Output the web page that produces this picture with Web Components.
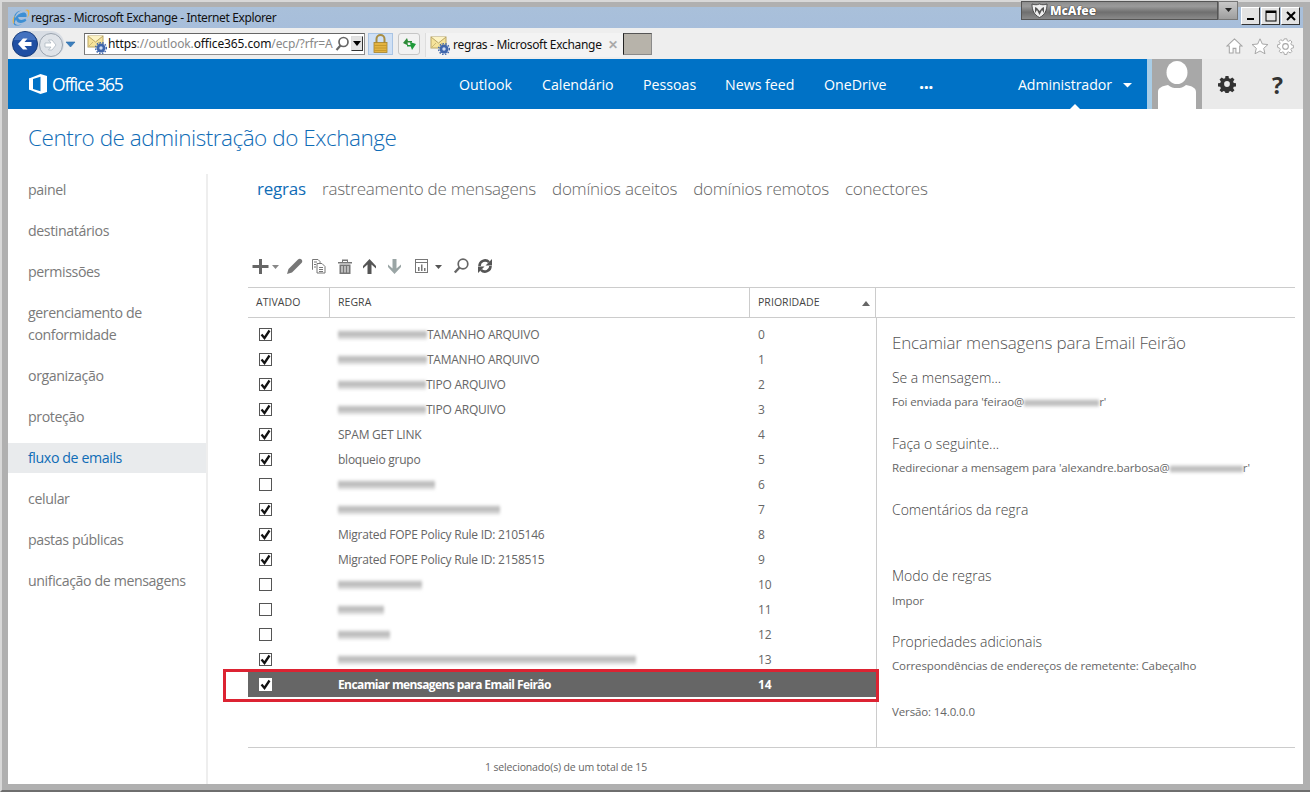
<!DOCTYPE html>
<html lang="pt"><head><meta charset="utf-8"><title>regras - Microsoft Exchange</title>
<style>
html,body{margin:0;padding:0;height:792px;overflow:hidden;background:#b0b0b0;font-family:"Open Sans","Liberation Sans",sans-serif}
</style></head><body>
<ie-window>
  <ie-titlebar></ie-titlebar>
  <ie-toolbar></ie-toolbar>
  <o365-header></o365-header>
  <eac-app></eac-app>
</ie-window>
<script>
const el=(html)=>{const t=document.createElement('template');t.innerHTML=html;return t};
const mk=(name,html)=>{const t=el(html);customElements.define(name,class extends HTMLElement{constructor(){super();this.attachShadow({mode:'open'}).appendChild(t.content.cloneNode(true))}})};
const mailIcon=`<svg width="20" height="20" viewBox="0 0 20 20"><rect x="1" y="2" width="15" height="11" fill="#f6e39a" stroke="#b9a566"/><path d="M1 2l7.5 6L16 2" fill="#fdf3c4" stroke="#b9a566"/><path d="M1 13l5-5M16 13l-5-5" stroke="#cdb878" fill="none"/><circle cx="14" cy="14" r="4.5" fill="#3f66ac"/><circle cx="14" cy="14" r="5.4" fill="none" stroke="#3f66ac" stroke-width="1.4" stroke-dasharray="1.5 1.4"/><circle cx="14" cy="14" r="1.7" fill="#cfdcf2"/></svg>`;

mk('ie-window',`<style>:host{display:flex;flex-direction:column;box-sizing:border-box;width:1310px;height:792px;padding:7px 7px 6px 6px;background:#b0b0b0;border-top:2px solid #d8d8d8;border-left:2px solid #d8d8d8;border-bottom:2px solid #6e6e6e;position:relative}</style><slot></slot>`);

mk('ie-titlebar',`<style>
:host{display:flex;align-items:center;height:21px;margin:-2px -7px 0 -6px;padding-left:6px;padding-right:7px;flex:none;position:relative;font:12px "Noto Sans","Liberation Sans",sans-serif;color:#111}
.bg{position:absolute;left:6px;right:7px;top:0;bottom:0;background:linear-gradient(#a9c0da,#a7bedb)}
.row{position:relative;display:flex;align-items:center;width:100%}
.t{margin-left:0;letter-spacing:-.38px;white-space:nowrap}
.sp{flex:1}
.mc{position:absolute;left:1013px;top:-7px;width:197px;height:19px;box-sizing:border-box;border:1px solid #555;background:linear-gradient(#8d8d8d,#9b9b9b 25%,#6f6f6f 60%,#8a8a8a);display:flex;align-items:center;padding-left:9px;color:#fff;font:700 12px "Open Sans",sans-serif;text-shadow:0 0 1px #222,0 0 1px #222}
.mc b{margin-left:2px;letter-spacing:-.1px}
.dd{position:absolute;left:1210px;top:-7px;width:20px;height:19px;box-sizing:border-box;background:linear-gradient(#c8c8c8,#9e9e9e);border:1px solid #777;display:flex;align-items:center;justify-content:center}
.wb{position:absolute;top:-1px;height:18px;width:19px;box-sizing:border-box;background:#e3e3e3;border:1px solid;border-color:#fff #333 #333 #fff;display:flex;align-items:center;justify-content:center}
</style>
<div class="bg"></div>
<div class="row">
<svg width="20" height="19" viewBox="0 0 20 19" style="margin-left:3px"><path d="M3 12C2 6 7 2 11 2.500 7 3 4 7 4 10c2-3 5-5 8-5.500 3-.5 4 2 3.500 4.500H7.200c0 3 4 4 7 1.500l1.200 2C12 16 6 16 5 11.500L3.600 14.500C4 17 7 17.800 11 16 7 18.500 2.500 18 2.500 15 2.500 14 3 13 3 12z" fill="#3d8fd4"/><path d="M7.500 7.500h5c0-2-4-2.500-5 0z" fill="#3d8fd4"/><path d="M14 2c3-1.500 5 0 4.200 3.500-.4 2-1 3.500-2.200 5 .8-2.500 1.500-5 .8-6.500-.5-1-1.500-1.500-2.800-2z" fill="#e8b24a"/><path d="M2 15.500C1 12 2 9.500 4 7 3 10 2.500 13 3 15.500z" fill="#e8b24a"/></svg>
<span class="t">regras - Microsoft Exchange - Internet Explorer</span>
<span class="sp"></span>
<div class="mc"><svg width="17" height="15" viewBox="0 0 17 15"><path d="M1 1c3 1 5 1 7.500 0C11 2 13 2 16 1c0 6-2 11-7.500 13.500C3 12 1 7 1 1z" fill="#eee" stroke="#333" stroke-width=".8"/><path d="M4 4v6l2-3 2.500 5L11 7l2 3V4l-2 1-2.500 3L6 5z" fill="#555"/></svg><b>McAfee</b></div>
<div class="dd"><svg width="9" height="5"><path d="M1 0h7L4.500 4z" fill="#222"/></svg></div>
<div class="wb" style="left:1233px"><svg width="10" height="10"><rect x="1" y="7" width="7" height="2" fill="#000"/></svg></div>
<div class="wb" style="left:1253px"><svg width="12" height="12"><rect x="1" y="1" width="10" height="10" fill="none" stroke="#000"/><rect x="1" y="1" width="10" height="2"/></svg></div>
<div class="wb" style="left:1273px"><svg width="12" height="12"><path d="M2 2l8 8M10 2l-8 8" stroke="#000" stroke-width="2"/></svg></div>
</div>`);

mk('ie-toolbar',`<style>
:host{display:flex;align-items:center;height:31px;flex:none;background:#eeeeee;padding-left:3px;font:12px "Noto Sans","Liberation Sans",sans-serif;color:#111}
.nav{display:flex;align-items:center;width:73px;flex:none}
.addr{display:flex;align-items:center;box-sizing:border-box;width:281px;height:22px;background:#fff;border:1px solid #8e8e8e;border-top-color:#666;border-left-color:#777;flex:none;padding-left:2px}
.url{margin-left:1px;letter-spacing:-.12px;color:#888;white-space:nowrap;width:227px;flex:none}
.url b{font-weight:400;color:#111}
.sb{box-sizing:border-box;width:12px;height:15px;background:#e2e2e2;border:1px solid #444;border-color:#ddd #333 #333 #ddd;display:flex;align-items:center;justify-content:center;margin-left:1px}
.lock{width:25px;height:22px;margin-left:3px;flex:none;background:#cfe0f5;border:1px solid #a9c4e4;box-sizing:border-box;display:flex;align-items:center;justify-content:center}
.ref{width:22px;height:22px;margin-left:5px;flex:none;background:#f2f2f2;border:1px solid #c6c6c6;border-radius:3px;box-sizing:border-box;display:flex;align-items:center;justify-content:center}
.tab{display:flex;align-items:center;width:198px;height:24px;margin-left:5px;flex:none;box-sizing:border-box;background:#f3f3f3;border-left:1px solid #ddd;padding-left:4px;position:relative;top:1px}
.tt{margin-left:3px;letter-spacing:-.3px;white-space:nowrap;width:147px;flex:none}
.x{color:#a9a9a9;font-weight:700;font-size:12px;margin-left:8px;font-family:"Liberation Sans",sans-serif}
.grey{width:29px;height:22px;flex:none;background:#b7b3aa;border:1px solid;border-color:#555 #8a8a8a #8a8a8a #222;box-sizing:border-box}
.sp{flex:1}
.ic{display:flex;gap:8px;margin-right:9px;position:relative;top:2px}
</style>
<div class="nav">
<svg width="72" height="28" viewBox="0 0 72 28"><path d="M14 1h26a13 13 0 0 1 0 26H14z" fill="#cfd6df" opacity=".7"/><circle cx="14" cy="14" r="12.500" fill="#1f4fa3" stroke="#163a78"/><path d="M14 2a12 12 0 0 1 11 8H3a12 12 0 0 1 11-8z" fill="#5d8bd2" opacity=".6"/><path d="M20.500 12h-7l3-3.500H12L7 14l5 5.500h4.500l-3-3.500h7z" fill="#fff"/><circle cx="40" cy="15" r="11.500" fill="#dfe3e8" stroke="#9aa3ae"/><path d="M34 13h6l-2.500-3h3.500l4 5-4 5h-3.500l2.500-3h-6z" fill="#fff" stroke="#a8b1bc" stroke-width=".7"/><path d="M55 12h9l-4.500 5z" fill="#3b7fbe" stroke="#2b6aa5" stroke-width=".6"/></svg>
</div>
<div class="addr">${mailIcon}<span class="url"><b>https</b>://outlook.<b>office365.com</b>/ecp/?rfr=A</span>
<svg width="15" height="16" viewBox="0 0 15 16" style="flex:none"><circle cx="8.500" cy="6" r="4.500" fill="none" stroke="#666" stroke-width="1.700"/><path d="M5.500 9.500L1.500 14" stroke="#666" stroke-width="2.200"/></svg>
<div class="sb"><svg width="8" height="5"><path d="M0 0h8L4 5z" fill="#000"/></svg></div></div>
<div class="lock"><svg width="15" height="20" viewBox="0 0 15 20"><path d="M3.500 9V5a4 4 0 0 1 8 0v4" fill="none" stroke="#a88d43" stroke-width="2"/><rect x="1" y="8.500" width="13" height="10" fill="#e3b341" stroke="#a5822c" stroke-width=".8"/><path d="M1 11.500h13M1 14h13M1 16.500h13" stroke="#c69a2e"/></svg></div>
<div class="ref"><svg width="17" height="15" viewBox="0 0 17 15"><path d="M2 7l4-5 1 3h4v1.500H6.500l.5 3z" fill="#2e8b38"/><path d="M15 7l-4 6-1.200-3.500H6V8h3.500l-.5-3z" fill="#1f9a3a" transform="translate(0 1)"/></svg></div>
<div class="tab">${mailIcon}<span class="tt">regras - Microsoft Exchange</span><span class="x">✕</span></div>
<div class="grey"></div>
<span class="sp"></span>
<div class="ic">
<svg width="17" height="18" viewBox="0 0 18 18" fill="#fff" stroke="#a5a5a5" stroke-width="1.100"><path d="M9 1.500L1 9h2.500v7.500h4v-5h3v5h4V9H17z"/></svg>
<svg width="18" height="18" viewBox="0 0 20 18" fill="#fff" stroke="#a5a5a5" stroke-width="1.100"><path d="M10 1l2.600 5.800 6.200.6-4.700 4.200 1.400 6L10 14.500 4.500 17.600l1.400-6L1.200 7.400l6.200-.6z"/></svg>
<svg width="17" height="18" viewBox="0 0 18 18" fill="#fff" stroke="#a5a5a5" stroke-width="1.100"><path d="M7.500 1h3l.4 2.300 1.600.7 2-1.300 2 2-1.300 2 .7 1.600 2.300.4v3l-2.300.4-.7 1.600 1.300 2-2 2-2-1.300-1.600.7-.4 2.300h-3l-.4-2.300-1.600-.7-2 1.300-2-2 1.300-2-.7-1.600L-.4 11V8l2.300-.4.7-1.600-1.300-2 2-2 2 1.300 1.600-.7z" transform="translate(1 .5) scale(.9)"/><circle cx="9" cy="9.500" r="3"/></svg>
</div>`);

mk('o365-header',`<style>
:host{display:flex;align-items:stretch;height:50px;flex:none;background:#0072c6;color:#fff;font:14.2px "Open Sans",sans-serif}
.logo{display:flex;align-items:center;width:451px;flex:none;padding-left:21px;box-sizing:border-box}
.brand{font-size:17.500px;letter-spacing:-1.200px;margin-left:5px;font-weight:400}
nav{display:flex;align-items:center;width:688px;flex:none;position:relative}
nav span{position:absolute;white-space:nowrap;letter-spacing:0}
.adm{position:absolute;left:559px;top:16px}
nav span.adm{letter-spacing:-.1px}
.strip{width:5px;background:#a9cde6;flex:none}
.ava{width:50px;background:#a8a8a8;flex:none;display:flex}
.tools{flex:1;background:#eaeaea;display:flex;align-items:center;position:relative;color:#333}
.q{position:absolute;left:70px;top:10px;font:700 23px "Open Sans",sans-serif;color:#333}
.g{position:absolute;left:16px;top:16px}
.notch{position:absolute;left:611px;bottom:0;width:0;height:0;border:5px solid transparent;border-bottom-color:#fff;border-top:0}
nav span.dots{font-weight:700;top:11px;font-size:18px;letter-spacing:-.5px}
</style>
<div class="logo"><svg width="18" height="20" viewBox="0 0 18 20"><path d="M0 4.500L11.500 0 18 2v16l-6.500 2L0 15.500zM11.500 2.800L4 5v10l7.500 2.200z" fill="#fff"/><path d="M4 4.800v10.500L0 15.500V4.500z" fill="#fff"/></svg><span class="brand">Office 365</span></div>
<nav>
<span style="left:0">Outlook</span><span style="left:83px">Calendário</span><span style="left:184px">Pessoas</span><span style="left:266px">News feed</span><span style="left:365px">OneDrive</span><span class="dots" style="left:460px">...</span>
<span class="adm">Administrador</span>
<svg style="position:absolute;left:664px;top:24px" width="10" height="5"><path d="M0 0h9L4.500 4.500z" fill="#fff"/></svg>
<div class="notch"></div>
</nav>
<div class="strip"></div>
<div class="ava"><svg width="50" height="50" viewBox="0 0 50 50"><path d="M6 50v-17c0-4 4-6 10-7 3 2.500 5 3 9 3s6-.5 9-3c6 1 10 3 10 7v17z" fill="#fff"/><ellipse cx="25" cy="13.500" rx="10.500" ry="11.500" fill="#fff"/></svg></div>
<div class="tools">
<svg class="g" width="18" height="18" viewBox="0 0 18 18"><path fill="#333" fill-rule="evenodd" d="M7.300 0h3.400l.4 2.500 1.700.7 2.100-1.500 2.400 2.400-1.500 2.100.7 1.700 2.500.4v3.400l-2.500.4-.7 1.700 1.500 2.100-2.400 2.400-2.100-1.500-1.700.7-.4 2.500H7.300l-.4-2.500-1.700-.7-2.100 1.500L.7 15.900l1.500-2.100-.7-1.700L-1 11.700V8.300l2.500-.4.700-1.700L.7 4.100l2.400-2.400 2.100 1.500 1.700-.7zM9 5.800a3.200 3.200 0 1 0 0 6.400 3.200 3.200 0 0 0 0-6.400z" transform="translate(.9 .9) scale(.9)"/></svg>
<span class="q">?</span>
</div>`);

mk('eac-nav',`<style>
:host{display:block;width:200px;flex:none;box-sizing:border-box;padding-top:1px;border-right:2px solid #eeeeee;font:14.2px/22px "Open Sans",sans-serif;color:#7a7a7a;letter-spacing:-.4px}
div{padding:4px 0 4px 20px;margin-bottom:11px}
.on{background:#e9ebed;color:#0f6cb6;font-weight:400}
</style>
<div>painel</div><div>destinatários</div><div>permissões</div><div>gerenciamento de<br>conformidade</div><div>organização</div><div>proteção</div><div class="on">fluxo de emails</div><div>celular</div><div>pastas públicas</div><div>unificação de mensagens</div>`);

mk('eac-tabs',`<style>
:host{display:flex;gap:16px;height:28px;padding-left:9px;align-items:center;font:300 17px "Open Sans",sans-serif;color:#666;letter-spacing:-.24px;white-space:nowrap}
.on{color:#0f6cb6;font-weight:400;letter-spacing:-.2px}
</style><span class="on">regras</span><span>rastreamento de mensagens</span><span>domínios aceitos</span><span>domínios remotos</span><span>conectores</span>`);

mk('eac-tools',`<style>:host{display:flex;align-items:center;height:26px;padding-left:4px;margin-bottom:7px}</style>
<svg width="245" height="20" viewBox="0 0 245 20" fill="#666">
<path d="M7 3h3v6h6.500v3H10v6H7v-6H.5V9H7z"/><path d="M20 9h7l-3.500 4z" fill="#888"/>
<path d="M35 18l1.500-5L46 3.500c1-1 2.500-1 3.500 0s1 2.500 0 3.500L40 16.500z" fill="#777"/>
<g fill="none" stroke="#777"><path d="M61 13.500h-.5v-10h5.500l2 2v2"/><path d="M65 7.500h5l3 3v6.500h-8z"/><path d="M62 6h3M62 8.500h2M62 11h2M67 11.500h4M67 13.500h4M67 15.500h4"/></g>
<path d="M86 6h14v1.500H86zM90 3.500h6V6h-1V5h-4v1h-1zM87.500 8.500h11V18h-11zM89.500 10v6.500h1V10zM92.500 10v6.500h1V10zM95.500 10v6.500h1V10z" fill-rule="evenodd" fill="#777"/>
<path d="M117.500 3L124 10v2.500l-4.500-4V18h-4V8.500L111 12.500V10z" fill="#555"/>
<path d="M142.500 18L149 11V8.500l-4.500 4V3h-4v9.500L136 8.500V11z" fill="#9aa5a5"/>
<g fill="none" stroke="#777"><rect x="163.500" y="3.500" width="12" height="13"/><path d="M163.500 6.500h12"/></g><path d="M166 11h1.500v4H166zM169 8.500h1.500V15H169zM172 12h1.500v3H172z" fill="#777"/>
<path d="M183 9h7l-3.500 4z" fill="#555"/>
<circle cx="211" cy="8" r="4.800" fill="none" stroke="#666" stroke-width="1.700"/><path d="M207.500 11.500L202.800 16.500" stroke="#666" stroke-width="2.400"/>
<g fill="none" stroke="#555" stroke-width="2.600"><path d="M227.500 10a5.500 5.500 0 0 1 9.500-3.800"/><path d="M238.500 10a5.500 5.500 0 0 1-9.500 3.800"/></g><path d="M240 3v6.500h-6.500zM226 17v-6.500h6.500z" fill="#555"/>
</svg>`);

mk('rule-row',`<style>
:host{display:grid;grid-template-columns:90px 420px 118px;height:25px;align-items:center;font:12px "Open Sans",sans-serif;color:#666;letter-spacing:-.24px;white-space:nowrap}
:host([sel]){background:#666;color:#fff;font-weight:700;letter-spacing:-.6px}
.c{padding-left:11px;display:flex}
.r{display:flex;align-items:center}
.p{letter-spacing:0}
.blur{height:10px;background:linear-gradient(#e6e6e6,#b2b2b2 40%,#cfcfcf 68%,#f0f0f0);filter:blur(1.400px);flex:none}
svg{display:block}
</style>
<div class="c"><svg width="13" height="13"><rect class="b" x=".5" y=".5" width="12" height="12" fill="#fff" stroke="#555"/><path class="k" d="M2.500 6.500l3 3.500 5-7.500" fill="none" stroke="#111" stroke-width="2.300"/></svg></div>
<div class="r"><span class="blur"></span><span class="n"></span></div>
<div class="p"></div>`);
const rr=(r)=>{const s=r.shadowRoot,g=a=>r.getAttribute(a);
 if(!r.hasAttribute('on'))s.querySelector('.k').remove();
 if(r.hasAttribute('sel')){s.querySelector('.b').setAttribute('stroke','#fff')}
 const b=s.querySelector('.blur');if(g('blur'))b.style.width=g('blur')+'px';else b.remove();
 s.querySelector('.n').textContent=g('name')||'';s.querySelector('.p').textContent=g('pri');};

mk('rules-list',`<style>
:host{display:block;width:628px;flex:none;padding-top:4px;box-sizing:border-box}
</style><slot></slot>`);

mk('rule-detail',`<style>
:host{display:block;flex:1;border-left:1px solid #ccc;padding-left:15px;font:11.500px "Open Sans",sans-serif;color:#666;letter-spacing:-.12px;white-space:nowrap}
h2{margin:0;position:relative;font:300 17px/22px "Open Sans",sans-serif;color:#555;letter-spacing:-.15px;padding-top:14px}
h3{margin:0;font:300 14px/20px "Open Sans",sans-serif;color:#444;letter-spacing:-.03px}
p{margin:0;line-height:16px}
.blur{display:inline-block;height:8px;background:linear-gradient(#e2e2e2,#b4b4b4 50%,#e2e2e2);filter:blur(1.500px);vertical-align:-1px}
</style>
<h2>Encamiar mensagens para Email Feirão</h2>
<h3 style="margin-top:14px">Se a mensagem...</h3>
<p style="margin-top:6px">Foi enviada para 'feirao@<span class="blur" style="width:75px"></span>r'</p>
<h3 style="margin-top:24px">Faça o seguinte...</h3>
<p style="margin-top:6px">Redirecionar a mensagem para 'alexandre.barbosa@<span class="blur" style="width:73px"></span>r'</p>
<h3 style="margin-top:24px">Comentários da regra</h3>
<h3 style="margin-top:46px">Modo de regras</h3>
<p style="margin-top:7px">Impor</p>
<h3 style="margin-top:23px">Propriedades adicionais</h3>
<p style="margin-top:6px">Correspondências de endereços de remetente: Cabeçalho</p>
<p style="margin-top:30px">Versão: 14.0.0.0</p>`);

mk('rules-table',`<style>
:host{display:block;font:10.500px "Open Sans",sans-serif;color:#444;position:relative}
.hd{display:grid;grid-template-columns:82px 420px 126px 1fr;height:31px;box-sizing:border-box;border-top:1px solid #ccc;border-bottom:1px solid #ccc;align-items:stretch;letter-spacing:.05px}
.hd div{display:flex;align-items:center;padding:0 0 2px 8px;border-right:1px solid #ccc;box-sizing:border-box;position:relative}
.hd div:last-child{border:0}
.body{display:flex;height:430px;border-bottom:1px solid #ccc;box-sizing:border-box}
.ft{height:38px;display:flex;align-items:center;padding-left:237px;color:#666;font-size:10.500px;letter-spacing:-.15px}
.hl{position:absolute;left:-25px;top:382px;width:656px;height:33px;box-sizing:border-box;border:3px solid #dc2332;pointer-events:none}
svg{position:absolute;right:5px;top:13px}
</style>
<div class="hd"><div>ATIVADO</div><div>REGRA</div><div>PRIORIDADE<svg width="8" height="5"><path d="M0 5l4-5 4 5z" fill="#666"/></svg></div><div></div></div>
<div class="body"><slot name="list"></slot><slot name="detail"></slot></div>
<div class="ft">1 selecionado(s) de um total de 15</div>
<div class="hl"></div>`);

mk('eac-app',`<style>
:host{display:flex;flex-direction:column;flex:1;background:#fff;min-height:0}
h1{margin:0;height:65px;box-sizing:border-box;padding:15px 0 0 20px;font:300 22.500px/28px "Open Sans",sans-serif;color:#0f6cb6;letter-spacing:-.47px}
.m{display:flex;flex:1;min-height:0}
.p{flex:1;padding:0 8px 0 40px;min-width:0}
.sp{height:51px}
</style>
<h1>Centro de administração do Exchange</h1>
<div class="m"><eac-nav></eac-nav><div class="p"><eac-tabs></eac-tabs><div class="sp"></div><eac-tools></eac-tools><div style="height:1px"></div><rules-table><rules-list slot="list" id="l"></rules-list><rule-detail slot="detail"></rule-detail></rules-table></div></div>`);
const rows=[[1,89,'TAMANHO ARQUIVO'],[1,89,'TAMANHO ARQUIVO'],[1,88,'TIPO ARQUIVO'],[1,88,'TIPO ARQUIVO'],[1,0,'SPAM GET LINK'],[1,0,'bloqueio grupo'],[0,97,''],[1,162,''],[1,0,'Migrated FOPE Policy Rule ID: 2105146'],[1,0,'Migrated FOPE Policy Rule ID: 2158515'],[0,84,''],[0,46,''],[0,52,''],[1,298,''],[1,0,'Encamiar mensagens para Email Feirão']];
const app=document.querySelector('eac-app');const list=app.shadowRoot.getElementById('l');
rows.forEach((r,i)=>{const e=document.createElement('rule-row');if(r[0])e.setAttribute('on','');if(r[1])e.setAttribute('blur',r[1]);e.setAttribute('name',r[2]);e.setAttribute('pri',i);if(i==14)e.setAttribute('sel','');list.appendChild(e);rr(e)});
</script>
</body></html>
